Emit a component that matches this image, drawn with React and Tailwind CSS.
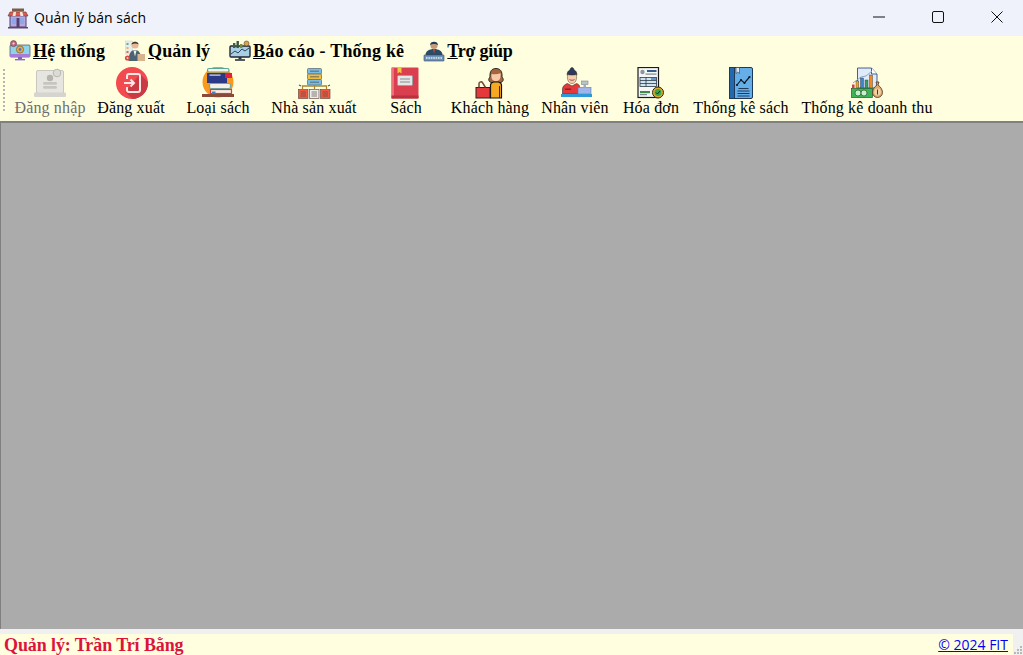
import React from "react";

function StoreIcon() {
  return (
    <svg width="22" height="22" viewBox="0 0 22 22">
      <rect x="3" y="8" width="16" height="12" fill="#b9a7e0" stroke="#4b3f72" />
      <rect x="5" y="11" width="4" height="6" fill="#8fa6e8" />
      <rect x="13" y="11" width="4" height="6" fill="#8fa6e8" />
      <rect x="9.5" y="11" width="3" height="9" fill="#54406f" />
      <rect x="5" y="1.5" width="12" height="3" fill="#7b5b4b" />
      <path d="M3 5h16l2 4H1z" fill="#e0584f" stroke="#5a3a3a" strokeWidth=".6" />
      <path d="M6.5 5l-1 4h3l.6-4zM12.8 5l.6 4h3l-1-4z" fill="#f5e6d0" />
      <rect x="1" y="20" width="20" height="1.5" fill="#5a4a6a" />
    </svg>
  );
}

function MenuSystem() {
  return (
    <svg width="22" height="22" viewBox="0 0 22 22">
      <rect x="1" y="5" width="20" height="12" rx="1" fill="#8fd3ea" stroke="#3c4a63" strokeWidth=".7" />
      <rect x="1" y="14" width="20" height="3" fill="#a77bd8" />
      <rect x="9" y="17" width="4" height="2" fill="#7a6aa8" />
      <rect x="6" y="19" width="10" height="1.4" fill="#8a6cc6" />
      <circle cx="11" cy="9.5" r="3.6" fill="#f0a63a" stroke="#7a5a2a" strokeWidth=".7" />
      <circle cx="11" cy="9.5" r="1.4" fill="#4c78c8" />
      <circle cx="4.5" cy="3.6" r="3" fill="#c0687c" stroke="#68404e" strokeWidth=".7" />
      <circle cx="4.5" cy="3.6" r="1" fill="#f3e3d0" />
    </svg>
  );
}

function MenuManage() {
  return (
    <svg width="22" height="22" viewBox="0 0 22 22">
      <rect x="1.5" y="1" width="7" height="13" fill="#e8edf0" stroke="#c4ccd2" strokeWidth=".5" />
      <rect x="2.5" y="3" width="2" height="2" fill="#5cb37c" />
      <rect x="2.5" y="7" width="2" height="2" fill="#e9b84a" />
      <rect x="2.5" y="11" width="2" height="2" fill="#e06a5a" />
      <circle cx="11" cy="5" r="3.6" fill="#e8b795" />
      <path d="M7.5 4.5C7.5 1 14.5 .6 14.5 4.5 13 3 10 3 7.5 4.5z" fill="#3c3a3a" />
      <path d="M4.5 21c0-8 3-11 6.5-11s6.5 3 6.5 11z" fill="#4b6472" />
      <path d="M9.5 10.5l1.5 6 1.5-6z" fill="#f1f1f1" />
      <rect x="13.5" y="14" width="7.5" height="7" fill="#d9b58f" />
      <circle cx="3.5" cy="18" r="2.6" fill="#d9473f" />
      <circle cx="3.5" cy="18" r="1" fill="#f4d2c8" />
    </svg>
  );
}

function MenuReport() {
  return (
    <svg width="22" height="22" viewBox="0 0 22 22">
      <rect x="1" y="6" width="20" height="11" rx="1" fill="#a9cfe4" stroke="#1f2935" strokeWidth="1.4" />
      <path d="M2 14l4-3 3 2 4-4 3 2 4-3" fill="none" stroke="#31465c" strokeWidth="1" />
      <rect x="4" y="3" width="2.4" height="5" fill="#3f5e46" />
      <rect x="7.5" y="1" width="2.4" height="7" fill="#39543f" />
      <rect x="11" y="4" width="2.4" height="4" fill="#7d8a44" />
      <circle cx="17.5" cy="3.5" r="2.5" fill="#dda24a" stroke="#56462c" strokeWidth=".6" />
      <rect x="9.5" y="17" width="3" height="2.4" fill="#2e3742" />
      <rect x="6" y="19.2" width="10" height="1.6" fill="#2e3742" />
    </svg>
  );
}

function MenuHelp() {
  return (
    <svg width="22" height="22" viewBox="0 0 22 22">
      <circle cx="11" cy="5.5" r="3.6" fill="#c79a7c" />
      <path d="M7 5C7 .5 15 .5 15 5 13 3.5 9 3.5 7 5z" fill="#1f3e56" />
      <path d="M2.5 15c0-4 4-6 8.5-6s8.5 2 8.5 6z" fill="#2a4a66" />
      <path d="M10 9l1 5 1-5z" fill="#c9493f" />
      <rect x="1" y="15" width="20" height="6" rx=".6" fill="#6f93b8" stroke="#33485e" strokeWidth=".6" />
      <path d="M3 18h16" stroke="#dfeaf3" strokeWidth="1.4" strokeDasharray="1.6 .8" />
    </svg>
  );
}

function LoginIcon() {
  return (
    <svg width="34" height="32" viewBox="0 0 34 32">
      <rect x="3.5" y="3.5" width="27" height="23" rx="1.5" fill="#e6e5df" stroke="#c8c7c1" />
      <circle cx="24" cy="6" r="3.8" fill="#dcdbd5" stroke="#b9b8b2" />
      <circle cx="17" cy="11" r="3.2" fill="#b5b4ae" />
      <rect x="10" y="15" width="14" height="2.8" rx="1.4" fill="#c6c5bf" />
      <rect x="10" y="19" width="14" height="2.8" rx="1.4" fill="#c6c5bf" />
      <rect x="1" y="25.5" width="32" height="4.5" rx="1" fill="#d5d4ce" />
    </svg>
  );
}

function LogoutIcon() {
  return (
    <svg width="32" height="32" viewBox="0 0 32 32">
      <defs>
        <clipPath id="logout-circle"><circle cx="16" cy="16" r="16" /></clipPath>
      </defs>
      <circle cx="16" cy="16" r="16" fill="#f34a50" />
      <path d="M24 7l14 14v14H20L9 25z" fill="#c93a45" clipPath="url(#logout-circle)" />
      <path d="M11 12V9a2 2 0 0 1 2-2h9a2 2 0 0 1 2 2v14a2 2 0 0 1-2 2h-9a2 2 0 0 1-2-2v-3" fill="none" stroke="#fde7e7" strokeWidth="2" />
      <path d="M8 16h10M14.5 12.5l3.5 3.5-3.5 3.5" fill="none" stroke="#fde7e7" strokeWidth="2" />
    </svg>
  );
}

function BooksIcon() {
  return (
    <svg width="34" height="32" viewBox="0 0 34 32">
      <circle cx="17" cy="15" r="15.5" fill="#f79a1f" />
      <rect x="6.5" y="1.5" width="21.5" height="3.5" rx="1.5" fill="#f3f3e8" stroke="#5aa598" strokeWidth="1.2" />
      <rect x="6" y="6" width="25" height="5" fill="#e11d48" />
      <rect x="6" y="6" width="18" height="5" fill="#2b3a86" />
      <rect x="8.5" y="7.5" width="11" height="1.2" fill="#f2d6d6" />
      <rect x="6" y="11" width="20" height="5" fill="#2b3a86" />
      <rect x="8.5" y="16.5" width="21" height="5" rx="1.5" fill="#f2f2ea" stroke="#6fa8a0" strokeWidth="1.2" />
      <rect x="9.5" y="22.5" width="21" height="4" fill="#f4f1e8" stroke="#d6393f" strokeWidth="1.2" />
      <rect x="11" y="24.5" width="3.5" height="3" fill="#3b82c4" />
      <rect x="1" y="27" width="32" height="3" fill="#8a4a3a" />
    </svg>
  );
}

function PublisherIcon() {
  return (
    <svg width="34" height="32" viewBox="0 0 34 32">
      <rect x="10.5" y="1.5" width="14" height="5.5" rx="1" fill="#79bde4" stroke="#66727c" strokeWidth=".8" />
      <rect x="10.5" y="7" width="14" height="5.5" rx="1" fill="#f0bd3f" stroke="#66727c" strokeWidth=".8" />
      <rect x="10.5" y="12.5" width="14" height="5.5" rx="1" fill="#79bde4" stroke="#66727c" strokeWidth=".8" />
      <path d="M13 4.2h9M13 9.8h9M13 15.2h9" stroke="#4a5660" strokeWidth=".8" />
      <path d="M17.5 18v4M5.5 22v-3h24v3" fill="none" stroke="#a8892f" strokeWidth="1.3" />
      <path d="M2 18l2 1M33 18l-2 1" stroke="#555" strokeWidth="1.2" />
      <rect x="1.5" y="22.5" width="9.5" height="9" fill="#f2573f" stroke="#6a5048" strokeWidth=".7" />
      <rect x="12.5" y="22.5" width="9.5" height="9" fill="#ececec" stroke="#6a5048" strokeWidth=".7" />
      <rect x="23.5" y="22.5" width="9.5" height="9" fill="#f2573f" stroke="#6a5048" strokeWidth=".7" />
      <path d="M3.5 25h5.5M3.5 27h5.5M3.5 29h5.5M14.5 25h5.5M14.5 27h5.5M14.5 29h5.5M25.5 25h5.5M25.5 27h5.5M25.5 29h5.5" stroke="#5c4a44" strokeWidth=".7" />
    </svg>
  );
}

function BookIcon() {
  return (
    <svg width="28" height="32" viewBox="0 0 28 32">
      <rect x="0.5" y="0.5" width="27" height="31" rx="1" fill="#da3f50" />
      <rect x="0.5" y="0.5" width="2.4" height="31" fill="#f0707c" />
      <path d="M0.5 28.5h27v3h-27z" fill="#b9303f" />
      <path d="M6.5 0.5h4v6l-2-1.6-2 1.6z" fill="#f3c73e" />
      <rect x="6.5" y="8.5" width="15" height="10" rx="1.2" fill="#e6e6e6" stroke="#9aa0a6" />
      <path d="M9 12h10M9 15h10" stroke="#858a90" strokeWidth="1.2" />
    </svg>
  );
}

function CustomerIcon() {
  return (
    <svg width="30" height="32" viewBox="0 0 30 32">
      <path d="M15 10c-.5-6 2-8.5 6-8.5s6.5 2.5 6 8.5c2 2 1.5 4.5-1 5.5H16c-2.500-1-3-3.500-1-5.500z" fill="#a5663f" stroke="#1a1a1a" strokeWidth=".9" />
      <path d="M16.5 7c3 .6 6 .4 9-.8.6 3.8-.5 8-4.5 8s-5-3.500-4.500-7.200z" fill="#f7c9a8" />
      <path d="M15.500 31V18c0-1.500 1.500-2.500 3-3h5c1.500.5 3 1.500 3 3v13z" fill="#f7a823" stroke="#111" strokeWidth="1.200" />
      <path d="M24.500 19v12" stroke="#111" strokeWidth=".8" />
      <rect x="1" y="20.500" width="14" height="10.500" fill="#e5383b" stroke="#222" />
      <path d="M4 20.500v-4c0-2 3-2 3.500-.8L10.500 20.500" fill="none" stroke="#6f4a35" strokeWidth="1.500" />
    </svg>
  );
}

function StaffIcon() {
  return (
    <svg width="34" height="32" viewBox="0 0 34 32">
      <path d="M8 8c0-3 1.500-4.500 3-5 0-1.500 1-2.500 2-2.500s2 1 2 2.500c1.500.5 3 2 3 5z" fill="#2c3a5e" stroke="#222" strokeWidth=".5" />
      <path d="M8.500 7.500c2 .8 7 .8 9 0 .5 5-.8 9-4.500 9s-5-4-4.500-9z" fill="#f8cdae" stroke="#5b3d2a" strokeWidth=".5" />
      <path d="M10.500 12.500c1.200 1 3.800 1 5 0" fill="none" stroke="#6b3a2a" strokeWidth=".8" />
      <path d="M3.500 27v-5c0-3 3-5 5-5.500l4.500 2.500 4.500-2.500c1.500.4 2.500 1.200 3 2.500v8z" fill="#e5383b" stroke="#333" strokeWidth=".6" />
      <rect x="6" y="21.500" width="6" height="1.400" fill="#8a2020" />
      <rect x="19" y="20.500" width="13" height="6.500" fill="#9db4ec" stroke="#6477a8" strokeWidth=".6" />
      <rect x="22.500" y="14" width="6.500" height="3.500" fill="#b9c3cc" stroke="#7b8790" strokeWidth=".6" />
      <rect x="24.500" y="17.500" width="2.500" height="3" fill="#a1acb5" />
      <rect x="2" y="27" width="31" height="3" fill="#2c9ad6" />
    </svg>
  );
}

function InvoiceIcon() {
  return (
    <svg width="28" height="32" viewBox="0 0 28 32">
      <rect x="1" y="0.500" width="20.500" height="30" fill="#f6f6f4" stroke="#1a1a1a" strokeWidth="1.200" />
      <circle cx="5.500" cy="5" r="2.200" fill="#8b979f" />
      <rect x="10" y="3" width="9.500" height="2" fill="#2f5f8a" />
      <rect x="8.500" y="6.500" width="11" height="1.200" fill="#7d8a94" />
      <rect x="3" y="10.500" width="16.500" height="9" fill="#cfe3f1" stroke="#2c3a46" strokeWidth=".8" />
      <path d="M3 13.500h16.500M3 16.500h16.500M9 10.500v9" stroke="#2c3a46" strokeWidth=".8" />
      <rect x="14" y="11" width="5" height="2" fill="#5c9ad0" />
      <rect x="3" y="24" width="10" height="2.200" fill="#3f8a4a" />
      <rect x="3" y="27" width="7" height="1.200" fill="#7d8a94" />
      <circle cx="21" cy="25.500" r="5.500" fill="#d8a928" stroke="#2d2a14" />
      <circle cx="21" cy="25.500" r="3.400" fill="#3fa34d" />
      <path d="M19 25.500l1.500 1.500 2.500-3" fill="none" stroke="#10300f" strokeWidth="1" />
    </svg>
  );
}

function StatBookIcon() {
  return (
    <svg width="26" height="32" viewBox="0 0 26 32">
      <rect x="1.500" y="0.500" width="23" height="31" rx="1.500" fill="#65aee8" stroke="#1e3a5a" />
      <rect x="1.500" y="0.500" width="5" height="31" fill="#2468ad" stroke="#1e3a5a" />
      <path d="M8 0.500h3.500v6l-1.750-1.400L8 6.500z" fill="#d9e8f3" stroke="#1e3a5a" strokeWidth=".6" />
      <path d="M9 18l4-5 3.500 3 5-6" fill="none" stroke="#101820" strokeWidth="1.200" />
      <circle cx="9" cy="18" r="1.100" fill="#101820" />
      <circle cx="13" cy="13" r="1.100" fill="#101820" />
      <circle cx="16.500" cy="16" r="1.100" fill="#101820" />
      <circle cx="21.500" cy="10" r="1.100" fill="#101820" />
      <path d="M10.500 21.500h10M9.500 24h12M9.500 26.500h12M9.500 29h12" stroke="#1e3a5a" strokeWidth="1" />
    </svg>
  );
}

function RevenueIcon() {
  return (
    <svg width="34" height="32" viewBox="0 0 34 32">
      <path d="M7.500 1h14l5.500 6v14h-19.500z" fill="#dfeafb" stroke="#46618a" />
      <path d="M21.500 1v6h5.500" fill="#fff" stroke="#46618a" />
      <path d="M3 16l8-6 5-1 6-5" fill="none" stroke="#8fa4c4" strokeWidth="1" />
      <rect x="2" y="17.500" width="2.600" height="3.500" fill="#d4404a" />
      <rect x="6" y="14" width="2.800" height="7" fill="#efa92a" stroke="#333" strokeWidth=".4" />
      <rect x="10.500" y="11" width="3" height="10" fill="#3f86c8" stroke="#333" strokeWidth=".4" />
      <rect x="15" y="13" width="3" height="8" fill="#37a06a" stroke="#333" strokeWidth=".4" />
      <rect x="19.500" y="8" width="3" height="13" fill="#ef8a1f" stroke="#333" strokeWidth=".4" />
      <rect x="1.500" y="21.500" width="21" height="9" fill="#3fb157" stroke="#1d5a2a" strokeWidth=".7" />
      <circle cx="8" cy="26" r="3" fill="#c6f0cb" stroke="#1d5a2a" strokeWidth=".7" />
      <circle cx="14" cy="26" r="3" fill="#c6f0cb" stroke="#1d5a2a" strokeWidth=".7" />
      <path d="M26 15h3l-1 3c3 2 4.500 5 4.500 7.500 0 3-2.500 5-5 5s-5-2-5-5c0-2.500 1.500-5.500 4.500-7.500z" fill="#dfa968" stroke="#4a3424" strokeWidth=".8" />
      <circle cx="27.500" cy="25" r="3.400" fill="#f2d3a8" />
      <path d="M27.500 22.500v5" stroke="#2b2b2b" strokeWidth=".9" />
    </svg>
  );
}

const tools = [
  { label: "Đăng nhập", Icon: LoginIcon, w: "w-[84px]", disabled: true },
  { label: "Đăng xuất", Icon: LogoutIcon, w: "w-[78px]", iconCls: "ml-[2px]" },
  { label: "Loại sách", Icon: BooksIcon, w: "w-[96px]" },
  { label: "Nhà sản xuất", Icon: PublisherIcon, w: "w-[96px]" },
  { label: "Sách", Icon: BookIcon, w: "w-[88px]", iconCls: "mr-[3px]" },
  { label: "Khách hàng", Icon: CustomerIcon, w: "w-[80px]" },
  { label: "Nhân viên", Icon: StaffIcon, w: "w-[90px]", iconCls: "ml-[2px]" },
  { label: "Hóa đơn", Icon: InvoiceIcon, w: "w-[62px]" },
  { label: "Thống kê sách", Icon: StatBookIcon, w: "w-[118px]" },
  { label: "Thống kê doanh thu", Icon: RevenueIcon, w: "w-[134px]" },
];

const menus = [
  { Icon: MenuSystem, u: "H", rest: "ệ thống", t: "tracking-[0.2px]" },
  { Icon: MenuManage, u: "Q", rest: "uản lý", t: "tracking-[0.05px]" },
  { Icon: MenuReport, u: "B", rest: "áo cáo - Thống kê", t: "tracking-[0.2px]" },
  { Icon: MenuHelp, u: "T", rest: "rợ giúp", t: "tracking-[-0.25px]" },
];

export default function App() {
  return (
    <div className="flex h-[655px] w-[1023px] flex-col overflow-hidden bg-[#f0f0f0] font-['Liberation_Serif',serif] text-black">
      <div className="flex h-[36px] shrink-0 items-center bg-[#eff2fb]">
        <div className="ml-[7px] mr-[5px] flex"><StoreIcon /></div>
        <span className="font-['Open_Sans',sans-serif] text-[14px] leading-none">Quản lý bán sách</span>
        <div className="ml-auto flex items-center gap-[47px] pr-[20px] pb-[3px]">
          <svg width="12" height="12" viewBox="0 0 12 12"><path d="M0 6h12" stroke="#111" strokeWidth="1" /></svg>
          <svg width="12" height="12" viewBox="0 0 12 12"><rect x=".5" y=".5" width="11" height="11" rx="1.5" fill="none" stroke="#111" /></svg>
          <svg width="12" height="12" viewBox="0 0 12 12"><path d="M.5.5l11 11M11.5.5l-11 11" stroke="#111" strokeWidth="1" /></svg>
        </div>
      </div>

      <div className="flex h-[85px] shrink-0 flex-col bg-[#ffffe0]">
        <div className="flex h-[29px] items-center gap-[19px] pl-[9px]">
          {menus.map(({ Icon, u, rest, t }) => (
            <div key={u} className="flex items-center gap-[2px]">
              <Icon />
              <span className={`text-[18px] font-bold leading-none ${t}`}><u>{u}</u>{rest}</span>
            </div>
          ))}
        </div>
        <div className="flex flex-1 pl-[3px]">
          <div className="mt-[4px] h-[42px] w-[2px] border-l-2 border-dotted border-[#b5b5b5]" />
          <div className="ml-[3px] flex">
            {tools.map(({ label, Icon, w, disabled, iconCls }) => (
              <div key={label} className={`flex flex-col items-center ${w}`}>
                <div className={`mt-[2px] flex h-[32px] items-center justify-center ${iconCls || ""}`}><Icon /></div>
                <span className={`text-[16px] leading-[18px] tracking-[0.15px] whitespace-nowrap ${disabled ? "text-[#6d6d6d]" : "text-black"}`}>{label}</span>
              </div>
            ))}
          </div>
        </div>
      </div>

      <div className="flex-1 border-t-2 border-l border-[#808080] bg-[#ababab]" />

      <div className="relative flex h-[26px] shrink-0 flex-col bg-[#f0f0f0]">
        <div className="mt-[5px] mr-[10px] flex h-[21px] items-center bg-[#ffffe0] pl-[4px] pr-[5px]">
          <span className="text-[18px] font-bold leading-none tracking-[-0.1px] text-[#dc143c]">Quản lý: Trần Trí Bằng</span>
          <a href="#" className="ml-auto font-['Open_Sans',sans-serif] text-[14px] leading-none text-[#0000ff] underline">© 2024 FIT</a>
        </div>
        <svg className="absolute right-0 bottom-0" width="10" height="10" viewBox="0 0 10 10">
          <path d="M7 1h2v2H7zM4 4h2v2H4zM7 4h2v2H7zM1 7h2v2H1zM4 7h2v2H4zM7 7h2v2H7z" fill="#b8b8b8" />
        </svg>
      </div>
    </div>
  );
}
